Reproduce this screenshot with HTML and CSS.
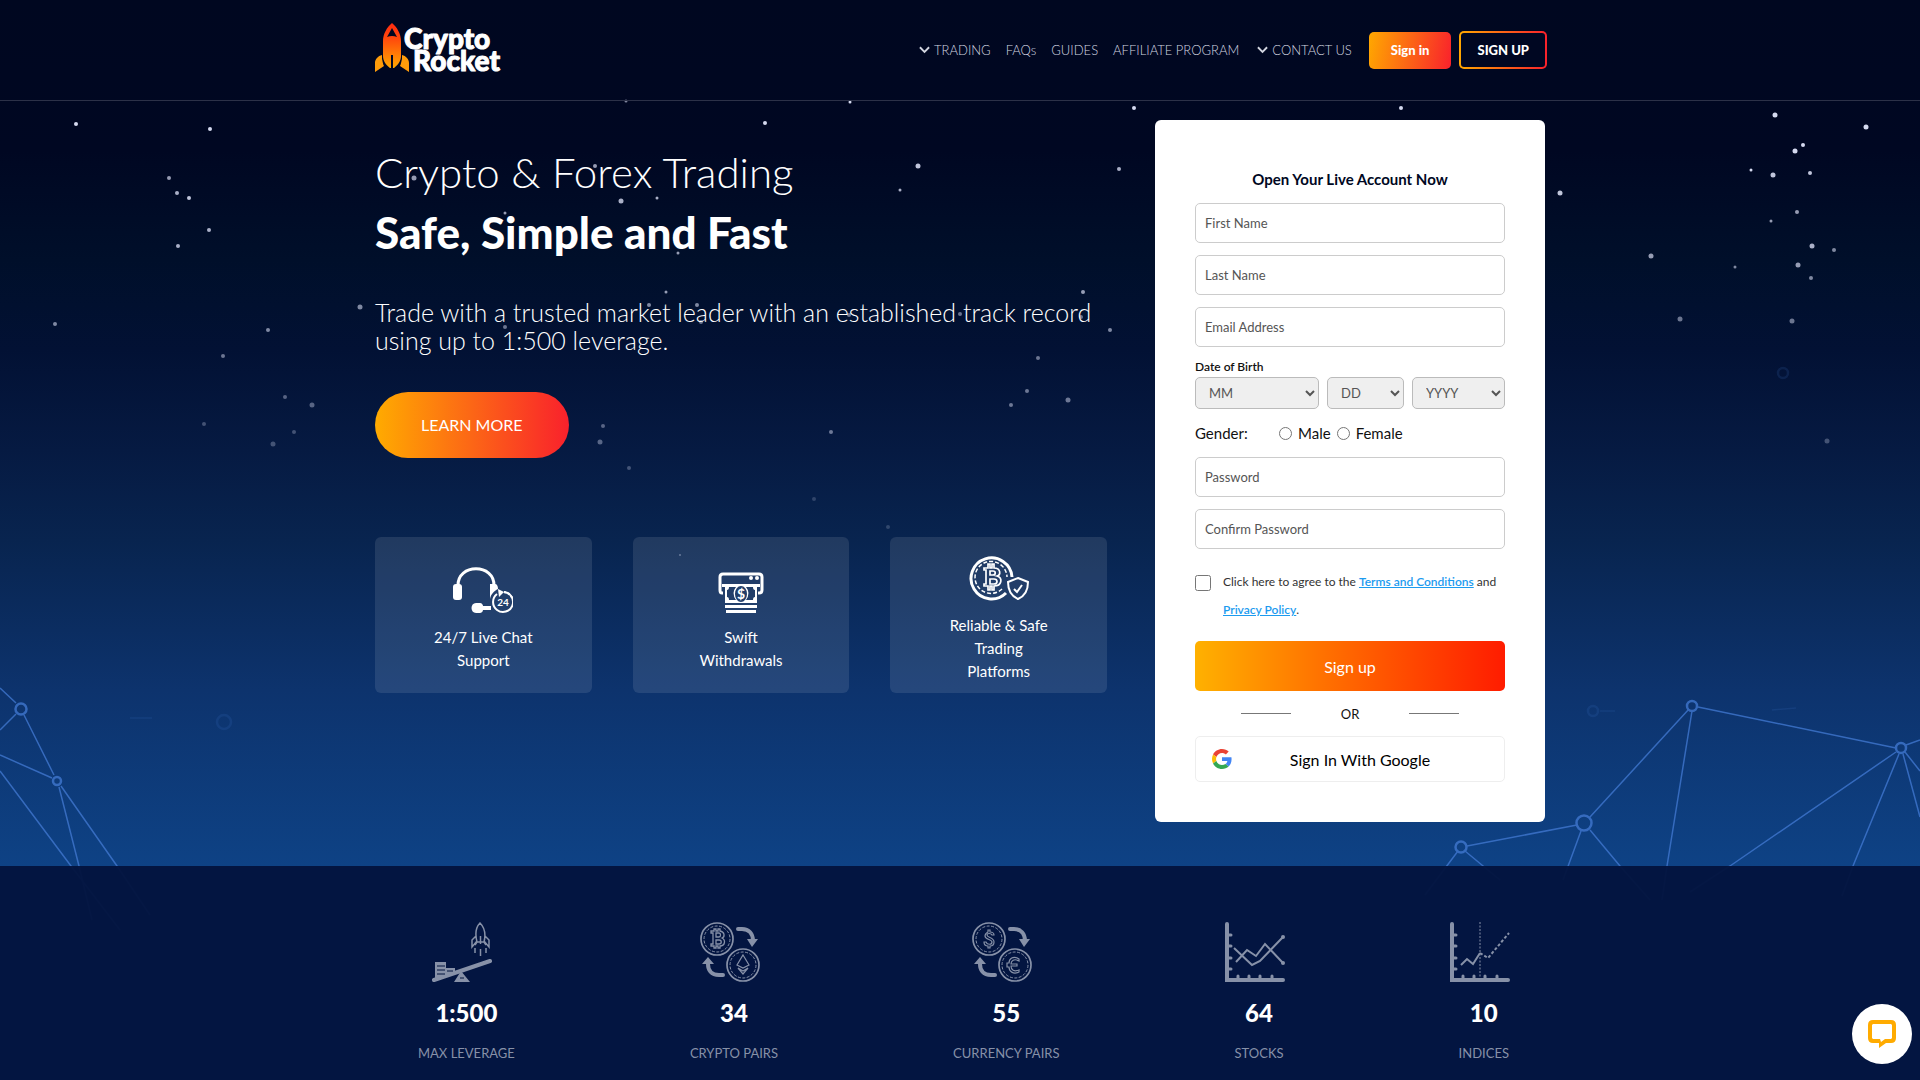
FILE: index.html
```html
<!DOCTYPE html>
<html lang="en">

<head>
    <meta charset="utf-8">
    <title>CryptoRocket</title>
    <link rel="stylesheet" href="styles.css">
</head>

<body>

    <!-- stars and network lines behind the page -->
    <svg class="sky" viewBox="0 0 1920 1080" preserveAspectRatio="xMidYMin slice" aria-hidden="true">
        <g class="stars">
            <circle cx="76" cy="124" r="2" />
            <circle cx="210" cy="129" r="2" />
            <circle cx="169" cy="178" r="2" opacity=".7" />
            <circle cx="177" cy="193" r="2" opacity=".8" />
            <circle cx="189" cy="198" r="2" opacity=".9" />
            <circle cx="209" cy="230" r="2" opacity=".8" />
            <circle cx="178" cy="246" r="2" opacity=".8" />
            <circle cx="55" cy="324" r="2" opacity=".6" />
            <circle cx="268" cy="330" r="2" opacity=".6" />
            <circle cx="223" cy="356" r="2" opacity=".5" />
            <circle cx="360" cy="307" r="2.5" opacity=".6" />
            <circle cx="285" cy="397" r="2" opacity=".4" />
            <circle cx="312" cy="405" r="2.5" opacity=".4" />
            <circle cx="204" cy="424" r="2" opacity=".3" />
            <circle cx="294" cy="432" r="2" opacity=".3" />
            <circle cx="273" cy="444" r="2.5" opacity=".3" />
            <circle cx="765" cy="123" r="2" />
            <circle cx="850" cy="102" r="1.5" />
            <circle cx="1134" cy="108" r="2" />
            <circle cx="1401" cy="108" r="2" />
            <circle cx="626" cy="101" r="1.5" opacity=".6" />
            <circle cx="918" cy="166" r="2.5" opacity=".9" />
            <circle cx="900" cy="190" r="1.5" opacity=".8" />
            <circle cx="1119" cy="169" r="2" opacity=".8" />
            <circle cx="414" cy="178" r="2.5" opacity=".7" />
            <circle cx="595" cy="166" r="2" opacity=".7" />
            <circle cx="621" cy="201" r="2.5" opacity=".8" />
            <circle cx="657" cy="198" r="1.5" opacity=".8" />
            <circle cx="505" cy="213" r="1.5" opacity=".7" />
            <circle cx="678" cy="253" r="1.5" opacity=".7" />
            <circle cx="666" cy="292" r="1.5" opacity=".7" />
            <circle cx="649" cy="305" r="2" opacity=".6" />
            <circle cx="697" cy="305" r="2" opacity=".6" />
            <circle cx="701" cy="322" r="2" opacity=".5" />
            <circle cx="505" cy="327" r="2" opacity=".5" />
            <circle cx="849" cy="315" r="2" opacity=".5" />
            <circle cx="960" cy="314" r="2" opacity=".5" />
            <circle cx="1081" cy="317" r="2" opacity=".5" />
            <circle cx="1083" cy="292" r="2" opacity=".7" />
            <circle cx="1110" cy="330" r="2" opacity=".6" />
            <circle cx="1038" cy="358" r="2" opacity=".5" />
            <circle cx="1027" cy="391" r="2" opacity=".5" />
            <circle cx="1068" cy="400" r="2.5" opacity=".5" />
            <circle cx="1011" cy="405" r="2" opacity=".5" />
            <circle cx="831" cy="432" r="2" opacity=".5" />
            <circle cx="603" cy="426" r="2" opacity=".4" />
            <circle cx="600" cy="442" r="2.5" opacity=".4" />
            <circle cx="629" cy="468" r="2" opacity=".3" />
            <circle cx="814" cy="499" r="2" opacity=".2" />
            <circle cx="888" cy="527" r="2" opacity=".2" />
            <circle cx="680" cy="555" r="1" opacity=".4" />
            <circle cx="1775" cy="115" r="2.5" />
            <circle cx="1866" cy="127" r="2.5" />
            <circle cx="1803" cy="145" r="2" />
            <circle cx="1795" cy="151" r="2.5" />
            <circle cx="1751" cy="170" r="1.5" />
            <circle cx="1773" cy="175" r="2.5" opacity=".9" />
            <circle cx="1810" cy="173" r="2" opacity=".9" />
            <circle cx="1560" cy="193" r="2.5" opacity=".9" />
            <circle cx="1797" cy="212" r="2" opacity=".7" />
            <circle cx="1771" cy="221" r="1.5" opacity=".7" />
            <circle cx="1812" cy="246" r="2.5" opacity=".8" />
            <circle cx="1834" cy="250" r="2" opacity=".6" />
            <circle cx="1651" cy="256" r="2.5" opacity=".7" />
            <circle cx="1735" cy="267" r="1.5" opacity=".6" />
            <circle cx="1798" cy="265" r="2.5" opacity=".7" />
            <circle cx="1811" cy="278" r="2" opacity=".6" />
            <circle cx="1680" cy="319" r="2.5" opacity=".5" />
            <circle cx="1792" cy="321" r="2.5" opacity=".5" />
            <circle cx="1827" cy="441" r="2.5" opacity=".3" />
        </g>
        <g class="net">
            <path d="M0 688L16 703M16 714L0 730M24 715L54 775M52 778L0 755M0 771L71 866L120 930M59 787L79 866L92 920M61 786L117 866L150 915" />
            <circle cx="21" cy="709" r="5.5" />
            <circle cx="57" cy="781" r="4" />
            <path d="M1467 846L1577 825M1590 817L1689 709M1698 707L1896 748M1692 711L1667 866L1662 900M1581 831L1563 880M1590 830L1620 866L1650 900M1458 851L1425 895M1465 851L1500 880M1896 752L1730 866L1690 892M1899 754L1853 866L1842 896M1906 745L1920 740M1905 752L1920 771M1903 754L1920 817" />
            <circle cx="1461" cy="847" r="5.5" />
            <circle cx="1584" cy="823" r="7.5" />
            <circle cx="1692" cy="706" r="5" />
            <circle cx="1901" cy="748" r="5" />
        </g>
        <g class="net faint">
            <circle cx="224" cy="722" r="7" />
            <circle cx="1593" cy="711" r="5" />
            <circle cx="1783" cy="373" r="5" />
            <path d="M130 718H152M1600 711H1615M1772 710L1796 708" />
        </g>
    </svg>

    <header class="header">
        <div class="container header-inner">
            <a href="#" class="logo" aria-label="Crypto Rocket">
                <svg width="134" height="56" viewBox="0 0 134 56">
                    <defs>
                        <linearGradient id="fire" x1="0" y1="0" x2="0" y2="1">
                            <stop offset="0" stop-color="#ff2a10" />
                            <stop offset=".35" stop-color="#ff4a0c" />
                            <stop offset="1" stop-color="#ffa800" />
                        </linearGradient>
                    </defs>
                    <path fill="url(#fire)" fill-rule="evenodd" d="M17 1C22 5 26 12 26 19V34C26 39 23 43 19 46H18V33H16V46H15C11 43 8 39 8 34V19C8 12 12 5 17 1ZM17 6L12 15Q17 13 22 15Z" />
                    <path fill="#ff9c0a" d="M7 33V37C8 41 8 42 9 44L0 50V41C0 37 3 34 7 33ZM27 33V37C26 41 26 42 25 44L34 50V41C34 37 31 34 27 33Z" />
                    <text class="logo-text" x="29" y="27">Crypto</text>
                    <text class="logo-text" x="38" y="49">Rocket</text>
                </svg>
            </a>
            <nav class="nav">
                <a href="#"><svg class="chevron" viewBox="0 0 12 8"><path d="M1 1L6 6L11 1" /></svg>TRADING</a>
                <a href="#">FAQs</a>
                <a href="#">GUIDES</a>
                <a href="#">AFFILIATE PROGRAM</a>
                <a href="#"><svg class="chevron" viewBox="0 0 12 8"><path d="M1 1L6 6L11 1" /></svg>CONTACT US</a>
            </nav>
            <div class="header-buttons">
                <a href="#" class="btn-signin">Sign in</a>
                <a href="#" class="btn-signup">SIGN UP</a>
            </div>
        </div>
    </header>

    <main class="container hero">
        <section class="intro">
            <h1>Crypto &amp; Forex Trading <b>Safe, Simple and Fast</b></h1>
            <p class="lead">Trade with a trusted market leader with an established track record using up to 1:500 leverage.</p>
            <a href="#" class="learn-more">LEARN MORE</a>

            <div class="features">
                <div class="feature">
                    <svg viewBox="0 0 60 60">
                        <path class="line" stroke-width="3" d="M5 27C4 4 42 4 41 27" />
                        <rect x="0" y="25" width="9" height="16" rx="3" />
                        <path d="M37 25H42C44 25 45 27 45 30C41 32 38 35 37 40ZM23 44H27C29 44 30 46 30 47H38V51H30C30 53 28 54 27 54H23C17 54 17 44 23 44Z" />
                        <path class="line" stroke-width="2" d="M51 33A10 10 0 1 1 44 35" />
                        <path class="line" stroke-width="2" stroke-dasharray="2 2" d="M51 33A10 10 0 0 1 60 43" />
                        <path d="M45 30L51 33L46 38Z" />
                        <text x="50" y="47" font-size="10" font-weight="bold" text-anchor="middle">24</text>
                    </svg>
                    <p>24/7 Live Chat Support</p>
                </div>
                <div class="feature">
                    <svg viewBox="0 0 60 60">
                        <path class="line" stroke-width="3" d="M12 34H11Q9 34 9 31V18Q9 15 12 15H48Q51 15 51 18V31Q51 34 48 34H47" />
                        <circle cx="40" cy="19" r="2" />
                        <circle cx="46" cy="19" r="2" />
                        <path fill-rule="evenodd" d="M11 25H49V28H46V44H14V28H11ZM18 28Q18 31 16 31V38Q18 38 18 41H25Q20 34 25 28ZM42 28H35Q40 34 35 41H42Q42 38 44 38V31Q42 31 42 28ZM30 27A6 8 0 1 0 30 43A6 8 0 1 0 30 27Z" />
                        <text x="30" y="40" font-size="14" font-weight="bold" text-anchor="middle">$</text>
                        <path d="M14 46H46V49H14ZM15 51H45V54H15Z" />
                    </svg>
                    <p>Swift Withdrawals</p>
                </div>
                <div class="feature">
                    <svg viewBox="0 0 60 60">
                        <path class="line" stroke-width="3" d="M37 46A20.500 20.500 0 1 1 43 30" />
                        <path class="line" stroke-width="1.500" stroke-dasharray="4 2" d="M33 42A16 16 0 1 1 38 30" />
                        <path class="line" stroke-width="1.700" d="M15 21H19V17H21V21H23V17H25V21C32 21 32 28 28 29C34 31 33 39 25 39V43H23V39H21V43H19V39H15V37H17V23H15ZM21 24H24C27 24 27 28 24 28H21ZM21 32H25C29 32 29 37 25 37H21Z" />
                        <path class="line" stroke-width="2" d="M49 31L59 35C59 43 56 49 49 52C42 49 39 43 39 35Z" />
                        <path class="line" stroke-width="2" d="M45 42L48 45L53 38" />
                    </svg>
                    <p>Reliable &amp; Safe Trading Platforms</p>
                </div>
            </div>
        </section>

        <form class="signup">
            <h2>Open Your Live Account Now</h2>
            <input class="field" type="text" placeholder="First Name" aria-label="First Name">
            <input class="field" type="text" placeholder="Last Name" aria-label="Last Name">
            <input class="field" type="email" placeholder="Email Address" aria-label="Email Address">

            <label class="dob-label" for="month">Date of Birth</label>
            <div class="dob">
                <select id="month"><option>MM</option></select>
                <select aria-label="Day"><option>DD</option></select>
                <select aria-label="Year"><option>YYYY</option></select>
            </div>

            <div class="gender">
                <span class="gender-title">Gender:</span>
                <label><input type="radio" name="gender"> Male</label>
                <label><input type="radio" name="gender"> Female</label>
            </div>

            <input class="field" type="password" placeholder="Password" aria-label="Password">
            <input class="field" type="password" placeholder="Confirm Password" aria-label="Confirm Password">

            <div class="agree">
                <input type="checkbox" id="agree">
                <label for="agree">Click here to agree to the <a href="#">Terms and Conditions</a> and <br><a href="#">Privacy Policy</a>.</label>
            </div>

            <button type="submit" class="submit">Sign up</button>
            <div class="or">OR</div>
            <button type="button" class="google">
                <svg viewBox="0 0 48 48">
                    <path fill="#ea4335" d="M24 9.500c3.540 0 6.710 1.220 9.210 3.600l6.850-6.850C35.900 2.380 30.470 0 24 0 14.620 0 6.510 5.380 2.560 13.220l7.980 6.190C12.430 13.720 17.740 9.500 24 9.500z" />
                    <path fill="#4285f4" d="M46.980 24.550c0-1.570-.15-3.090-.38-4.550H24v9.020h12.940c-.58 2.960-2.260 5.480-4.780 7.180l7.730 6c4.510-4.180 7.090-10.360 7.090-17.650z" />
                    <path fill="#fbbc05" d="M10.530 28.590c-.48-1.450-.76-2.990-.76-4.590s.27-3.140.76-4.590l-7.980-6.190C.92 16.460 0 20.120 0 24s.92 7.540 2.560 10.780l7.970-6.190z" />
                    <path fill="#34a853" d="M24 48c6.480 0 11.930-2.130 15.890-5.810l-7.730-6c-2.150 1.450-4.920 2.300-8.160 2.300-6.260 0-11.570-4.220-13.470-9.910l-7.980 6.190C6.510 42.620 14.620 48 24 48z" />
                </svg>
                <span>Sign In With Google</span>
            </button>
        </form>
    </main>

    <section class="stats">
        <div class="container stats-inner">
            <div class="stat">
                <svg viewBox="0 0 60 60">
                    <path class="line" stroke-width="4" stroke-linecap="round" d="M2 58L58 39" />
                    <path d="M3 40H14V55L3 58ZM14 46H23V52L14 54ZM29 49L38 60H22Z" />
                    <path class="gap" d="M5 44H13M5 48H13M5 52H13M15 49H21M28 56H32" />
                    <path class="line" stroke-width="1.500" d="M45 20C43 12 44 5 48 1C52 5 54 12 52 20ZM44 14L40 18V25L45 19M53 14L57 18V25L52 19M45 20L43 23M52 20L54 23M48.500 14V22M43 26V31M48.500 27V34M54 26V31" />
                </svg>
                <strong>1:500</strong>
                <span>MAX LEVERAGE</span>
            </div>
            <div class="stat">
                <svg viewBox="0 0 60 60">
                    <g class="line" stroke-width="1.700">
                        <circle cx="17" cy="17" r="16" />
                        <circle cx="43" cy="43" r="16" />
                        <circle cx="17" cy="17" r="13" stroke-width="1" stroke-dasharray="3 1.500" />
                        <circle cx="43" cy="43" r="13" stroke-width="1" stroke-dasharray="3 1.500" />
                        <path stroke-width="1.300" d="M11 9H14V7H16V9H18V7H20V9C25 10 25 15 22 16C26 18 25 24 20 24V26H18V24H16V26H14V24H11V22H13V11H11ZM16 11H19C21 11 21 15 19 15H16ZM16 18H19C22 18 22 22 19 22H16Z" />
                        <path stroke-width="1.200" d="M43 33L49 43L43 46L37 43ZM38 46L43 49L48 46L43 52Z" />
                        <path stroke-width="4" stroke-linecap="round" d="M38 7H42C49 7 53 12 53 19M23 53H19C11 53 8 48 8 42" />
                    </g>
                    <path d="M47 17H58L52 25ZM2 42H14L8 35Z" />
                </svg>
                <strong>34</strong>
                <span>CRYPTO PAIRS</span>
            </div>
            <div class="stat">
                <svg viewBox="0 0 60 60">
                    <g class="line" stroke-width="1.700">
                        <circle cx="17" cy="17" r="16" />
                        <circle cx="43" cy="43" r="16" />
                        <circle cx="17" cy="17" r="13" stroke-width="1" stroke-dasharray="3 1.500" />
                        <circle cx="43" cy="43" r="13" stroke-width="1" stroke-dasharray="3 1.500" />
                        <path stroke-width="1.200" d="M16 8H18V10C21 10 22 12 22 13H20C19 11 15 11 15 13C15 16 22 15 22 20C22 23 20 24 18 24V26H16V24C13 24 12 22 12 20H14C15 23 20 23 20 20C20 17 13 18 13 14C13 12 14 11 16 10ZM47 37V39C42 36 39 39 39 42H45V44H39C39 48 42 50 47 48V50C41 53 37 49 37 45H35V41H37C37 37 41 33 47 37Z" />
                        <path stroke-width="4" stroke-linecap="round" d="M38 7H42C49 7 53 12 53 19M23 53H19C11 53 8 48 8 42" />
                    </g>
                    <path d="M47 17H58L52 25ZM2 42H14L8 35Z" />
                </svg>
                <strong>55</strong>
                <span>CURRENCY PAIRS</span>
            </div>
            <div class="stat">
                <svg viewBox="0 0 60 60">
                    <path class="line" stroke-width="4" stroke-linecap="round" d="M2 2V58H58" />
                    <path class="line" stroke-width="3" stroke-linecap="round" d="M3 13H6M3 24H6M3 36H6M3 47H6M13 57V54M24 57V54M35 57V54M47 57V54" />
                    <path class="line" stroke-width="2" d="M9 26L27 43L35 39L58 15M11 40L22 28L31 34L40 22L58 41" />
                    <circle cx="58" cy="15" r="2" />
                    <circle cx="58" cy="41" r="2" />
                </svg>
                <strong>64</strong>
                <span>STOCKS</span>
            </div>
            <div class="stat">
                <svg viewBox="0 0 60 60">
                    <path class="line" stroke-width="4" stroke-linecap="round" d="M2 2V58H58" />
                    <path class="line" stroke-width="3" stroke-linecap="round" d="M3 13H6M3 24H6M3 36H6M3 47H6M13 57V54M24 57V54M35 57V54M47 57V54" />
                    <path class="line" stroke-width="2" d="M11 43L17 37L23 42L30 31" />
                    <path class="line" stroke-width="2" stroke-dasharray="3 2" d="M30 31L38 36L59 11" />
                    <path class="line" stroke-width="1" stroke-dasharray="2 1.500" d="M30 0V56" />
                </svg>
                <strong>10</strong>
                <span>INDICES</span>
            </div>
        </div>
    </section>

    <button class="chat" aria-label="Chat">
        <svg viewBox="0 0 28 28"><path fill="#ffab00" fill-rule="evenodd" d="M5 0H23Q28 0 28 5V18Q28 23 23 23H18L11 28V23H5Q0 23 0 18V5Q0 0 5 0ZM5 4L4 5V18L5 19H12L13 22L17 19H23L24 18V5L23 4Z" /></svg>
    </button>

</body>

</html>
```
FILE: styles.css
```css
* {
    box-sizing: border-box;
}

body {
    margin: 0;
    min-height: 100vh;
    position: relative;
    overflow-x: hidden;
    display: flex;
    flex-direction: column;
    font-family: Lato, "Open Sans", sans-serif;
    color: #fff;
    background-color: #03153f;
    background-image: linear-gradient(#000720 0, #000722 150px, #000f2a 260px, #021134 350px, #061a42 450px, #08244f 540px, #0d336d 690px, #0e4285 866px);
}

a {
    color: inherit;
    text-decoration: none;
}

.container {
    width: 100%;
    max-width: 1170px;
    margin: 0 auto;
}

.sky {
    position: absolute;
    top: 0;
    left: 0;
    width: 100%;
    height: 100%;
    z-index: -1;
}

.stars {
    fill: #d5daf0;
}

.net {
    fill: none;
    stroke: #4077cf;
    stroke-width: 1.5;
    opacity: .8;
}

.net circle {
    stroke-width: 2.5;
}

.net.faint {
    opacity: .15;
}

/* header */
.header {
    border-bottom: 1px solid #2c3148;
}

.header-inner {
    display: flex;
    align-items: center;
    height: 100px;
}

.logo {
    display: flex;
}

.logo-text {
    font-size: 28px;
    font-weight: 900;
    fill: #fff;
    stroke: #fff;
    stroke-width: 1;
    stroke-linejoin: round;
}

.nav {
    display: flex;
    gap: 15px;
    margin-left: auto;
    font-size: 13px;
    font-weight: 300;
    color: #d3d6e0;
}

.nav a {
    display: flex;
    align-items: center;
}

.chevron {
    width: 11px;
    height: 8px;
    margin: 0 4px 0 3px;
    fill: none;
    stroke: #d3d6e0;
    stroke-width: 2;
}

.header-buttons {
    display: flex;
    align-items: center;
    gap: 8px;
    margin-left: 17px;
    margin-right: -2px;
    font-size: 13px;
    font-weight: 900;
}

.btn-signin {
    padding: 8px 22px;
    line-height: 21px;
    border-radius: 5px;
    background: linear-gradient(100deg, #ffa800, #f9212c);
}

.btn-signup {
    padding: 6px 16px;
    line-height: 22px;
    border: 2px solid transparent;
    border-radius: 5px;
    background: linear-gradient(#000722, #000722) padding-box, linear-gradient(90deg, #ffa800, #f9212c) border-box;
}

/* hero */
.hero {
    display: grid;
    grid-template-columns: 1fr 390px;
    gap: 48px;
    padding: 19px 0 44px;
}

.intro {
    padding-top: 22px;
}

h1 {
    margin: 0 0 36px;
    font-size: 42px;
    line-height: 60px;
    font-weight: 300;
}

h1 b {
    display: block;
    font-size: 44px;
    font-weight: 900;
}

.lead {
    margin: 0 0 38px;
    font-size: 25px;
    line-height: 28px;
    font-weight: 300;
}

.learn-more {
    display: inline-block;
    padding: 0 46px;
    line-height: 66px;
    font-size: 16px;
    border-radius: 33px;
    background: linear-gradient(90deg, #ffab00, #f9212c);
}

.features {
    display: grid;
    grid-template-columns: repeat(3, 1fr);
    gap: 41px;
    margin-top: 79px;
}

.feature {
    display: flex;
    flex-direction: column;
    align-items: center;
    justify-content: center;
    gap: 7px;
    height: 156px;
    padding: 0 54px;
    border-radius: 6px;
    background: rgba(255, 255, 255, .1);
    text-align: center;
    font-size: 15px;
    line-height: 23px;
}

.feature svg {
    width: 60px;
    height: 60px;
    flex: none;
    fill: #fff;
}

.feature .line {
    fill: none;
    stroke: #fff;
}

.feature p {
    margin: 0;
}

/* sign up form */
.signup {
    display: flex;
    flex-direction: column;
    gap: 12px;
    padding: 48px 40px 40px;
    border-radius: 6px;
    background: #fff;
    color: #111;
}

.signup h2 {
    margin: 0;
    font-size: 15px;
    line-height: 23px;
    text-align: center;
    color: #000722;
}

.signup input,
.signup select,
.signup button {
    font-family: inherit;
}

.field {
    width: 100%;
    height: 40px;
    padding: 0 9px;
    border: 1px solid #ccc;
    border-radius: 5px;
    font-size: 13px;
    background: #fff;
}

.field::placeholder {
    color: #555;
}

.dob-label {
    height: 18px;
    font-size: 12px;
    line-height: 16px;
    font-weight: 600;
}

.dob {
    display: grid;
    grid-template-columns: 124fr 77fr 93fr;
    gap: 8px;
    margin-top: -12px;
}

.dob select {
    height: 32px;
    padding: 0 0 0 9px;
    border: 1px solid #bbb;
    border-radius: 5px;
    font-size: 13px;
    color: #555;
    background-color: #efefef;
}

.gender {
    display: flex;
    align-items: center;
    gap: 6px;
    height: 24px;
    font-size: 15px;
}

.gender-title {
    width: 78px;
}

.gender label {
    display: flex;
    align-items: center;
    gap: 6px;
}

.gender input {
    margin: 0;
}

.agree {
    display: flex;
    gap: 12px;
    margin: 7px 0 5px;
    font-size: 12px;
    line-height: 28px;
    color: #333;
}

.agree input {
    flex: none;
    width: 16px;
    height: 16px;
    margin: 7px 0 0;
}

.agree a {
    color: #1c9bef;
    font-weight: 600;
    text-decoration: underline;
}

.submit {
    height: 50px;
    border: 0;
    border-radius: 5px;
    font-size: 16px;
    color: #fff;
    background: linear-gradient(90deg, #ffb100, #ff7300 40%, #ff1c00);
}

.or {
    display: flex;
    align-items: center;
    justify-content: center;
    gap: 50px;
    height: 21px;
    font-size: 13px;
}

.or::before,
.or::after {
    content: "";
    width: 50px;
    border-top: 1px solid #777;
}

.google {
    display: flex;
    align-items: center;
    height: 46px;
    padding: 0 16px;
    border: 1px solid #eee;
    border-radius: 5px;
    font-size: 16px;
    background: #fff;
    color: #000;
}

.google svg {
    width: 20px;
    height: 20px;
}

.google span {
    flex: 1;
}

/* numbers */
.stats {
    flex: 1;
    padding: 56px 0 16px;
    background: rgba(3, 20, 62, .96);
}

.stats-inner {
    display: flex;
    justify-content: space-between;
    padding: 0 36px 0 43px;
}

.stat {
    display: flex;
    flex-direction: column;
    align-items: center;
}

/* icons may be wider than their label */
.stat svg {
    width: 60px;
    height: 60px;
    margin: 0 -10px 0 -18px;
    fill: #8791a8;
}

.stat .line {
    fill: none;
    stroke: #8791a8;
}

.stat .gap {
    stroke: #03143e;
    stroke-width: 1;
}

.stat strong {
    margin: 16px 0;
    font-size: 24px;
    line-height: 30px;
    font-weight: 900;
}

.stat span {
    font-size: 13px;
    line-height: 18px;
    color: #8791a8;
}

.chat {
    position: fixed;
    right: 8px;
    bottom: 16px;
    display: flex;
    align-items: center;
    justify-content: center;
    width: 60px;
    height: 60px;
    border: 0;
    border-radius: 50%;
    background: #fff;
}

.chat svg {
    width: 28px;
    height: 28px;
}
```
